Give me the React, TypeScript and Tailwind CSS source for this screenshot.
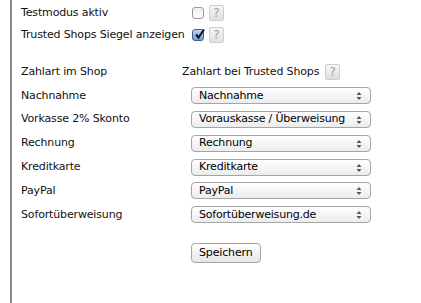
import React from "react";

const rows = [
  { label: "Nachnahme", value: "Nachnahme" },
  { label: "Vorkasse 2% Skonto", value: "Vorauskasse / Überweisung" },
  { label: "Rechnung", value: "Rechnung" },
  { label: "Kreditkarte", value: "Kreditkarte" },
  { label: "PayPal", value: "PayPal" },
  { label: "Sofortüberweisung", value: "Sofortüberweisung.de" },
];

function Help() {
  return (
    <span className="inline-flex h-[16px] w-[15px] items-center justify-center rounded-[2px] border border-[#cfcfcf] bg-gradient-to-b from-[#f6f6f6] to-[#dedede] text-[12px] leading-none tracking-normal text-[#a0a0a0]">
      ?
    </span>
  );
}

function Checkbox({ checked }: { checked?: boolean }) {
  if (checked) {
    return (
      <span className="relative inline-flex h-[12px] w-[12px] items-center justify-center rounded-[3px] border border-[#3f5f8f] bg-gradient-to-b from-[#bcd4f2] to-[#6e9fdc]">
        <svg width="12" height="12" viewBox="0 0 12 12" className="absolute -top-[2px] left-[1px]">
          <path d="M2 6.5 L4.5 9.5 L10 1.5" fill="none" stroke="#111" strokeWidth="2" />
        </svg>
      </span>
    );
  }
  return (
    <span className="inline-block h-[12px] w-[12px] rounded-[3px] border border-[#9a9a9a] bg-gradient-to-b from-[#f0f0f0] to-white" />
  );
}

function Select({ value }: { value: string }) {
  return (
    <div className="relative flex h-[17px] w-[180px] items-center rounded-[4px] border border-[#a5a5a5] bg-gradient-to-b from-white to-[#ececec] pl-[7px] text-[11px] tracking-[-0.2px] text-black">
      {value}
      <svg width="6" height="10" viewBox="0 0 6 10" className="absolute right-[8px] top-[3px]">
        <path d="M0.5 4 L3 1 L5.5 4 Z M0.5 6 L3 9 L5.5 6 Z" fill="#555" />
      </svg>
    </div>
  );
}

export default function App() {
  return (
    <div className="h-[303px] w-[421px] bg-white pl-[10px] font-['DejaVu_Sans',sans-serif] text-[11px] tracking-[-0.15px] text-[#111]">
      <div className="h-full border-l-2 border-[#8a8a8a] pl-[9px]">
        <div className="grid grid-cols-[171px_auto] pt-[4px]">
          <div className="flex h-[18px] items-center whitespace-nowrap">Testmodus aktiv</div>
          <div className="flex h-[18px] items-center gap-[5px]">
            <Checkbox />
            <Help />
          </div>
          <div className="mt-[4px] flex h-[18px] items-center whitespace-nowrap">Trusted Shops Siegel anzeigen</div>
          <div className="mt-[4px] flex h-[18px] items-center gap-[5px]">
            <Checkbox checked />
            <Help />
          </div>
        </div>

        <div className="mt-[19px] grid grid-cols-[161px_auto]">
          <div className="flex h-[18px] items-center">Zahlart im Shop</div>
          <div className="flex h-[18px] items-center gap-[6px]">
            Zahlart bei Trusted Shops
            <Help />
          </div>
          {rows.map((r) => (
            <React.Fragment key={r.label}>
              <div className="mt-[5.8px] flex h-[18px] items-center">{r.label}</div>
              <div className="mt-[5.8px] flex h-[18px] items-center pl-[9px]">
                <Select value={r.value} />
              </div>
            </React.Fragment>
          ))}
        </div>

        <div className="mt-[19px] pl-[170px]">
          <button className="h-[20px] rounded-[4px] border border-[#a5a5a5] bg-gradient-to-b from-white to-[#e6e6e6] px-[7px] text-[11px] leading-none text-black">
            Speichern
          </button>
        </div>
      </div>
    </div>
  );
}
